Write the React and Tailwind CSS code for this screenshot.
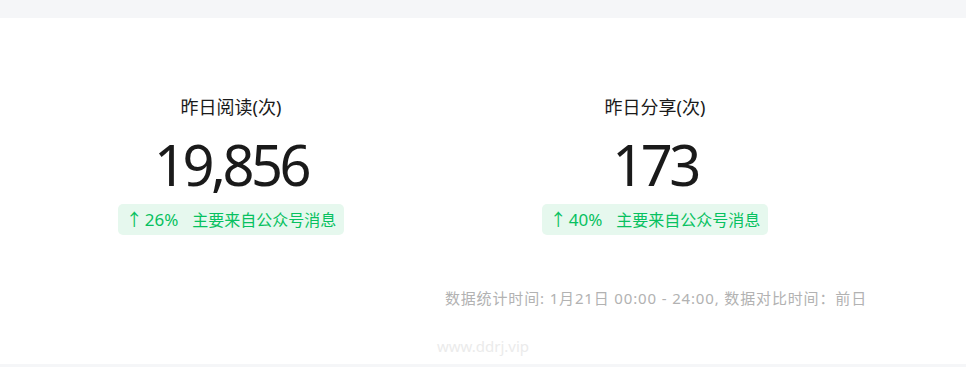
const stats = [
  { label: '昨日阅读(次)', value: '19,856', rate: '26%', note: '主要来自公众号消息' },
  { label: '昨日分享(次)', value: '173', rate: '40%', note: '主要来自公众号消息' },
];

function StatBlock({ stat }) {
  return (
    <div className="flex w-[424px] flex-col items-center">
      <div className="text-[18px] leading-[24px] text-[#1a1a1a]">{stat.label}</div>
      <div className="mt-[13px] font-['Noto_Sans',sans-serif] text-[56px] leading-[64px] tracking-[-3.5px] text-[#1a1a1a]">
        {stat.value}
      </div>
      <div className="mt-[8px] flex h-[31px] items-center gap-[14px] rounded-[5px] bg-[#e6f8ee] px-[8px] text-[16px] text-[#07c160]">
        <span className="flex items-center text-[17px]">
          <span className="mr-[2px]">↑</span>
          {stat.rate}
        </span>
        <span>{stat.note}</span>
      </div>
    </div>
  );
}

export default function App() {
  return (
    <div className="min-h-[367px] bg-[#f5f6f8] pt-[18px] font-['Noto_Sans','Noto_Sans_CJK_SC',sans-serif]">
      <div className="flex h-[346px] flex-col bg-white pl-[19px] pt-[77px]">
        <div className="flex">
          {stats.map((s) => (
            <StatBlock key={s.label} stat={s} />
          ))}
        </div>
        <div className="mt-[53px] flex w-[848px] justify-end text-[15px] leading-[20px] tracking-[0.85px] text-[#b2b2b2]">
          数据统计时间: 1月21日 00:00 - 24:00, 数据对比时间：前日
        </div>
        <div className="-ml-[19px] mt-[28px] text-center text-[15px] leading-[20px] text-[#ebebeb]">
          www.ddrj.vip
        </div>
      </div>
    </div>
  );
}
